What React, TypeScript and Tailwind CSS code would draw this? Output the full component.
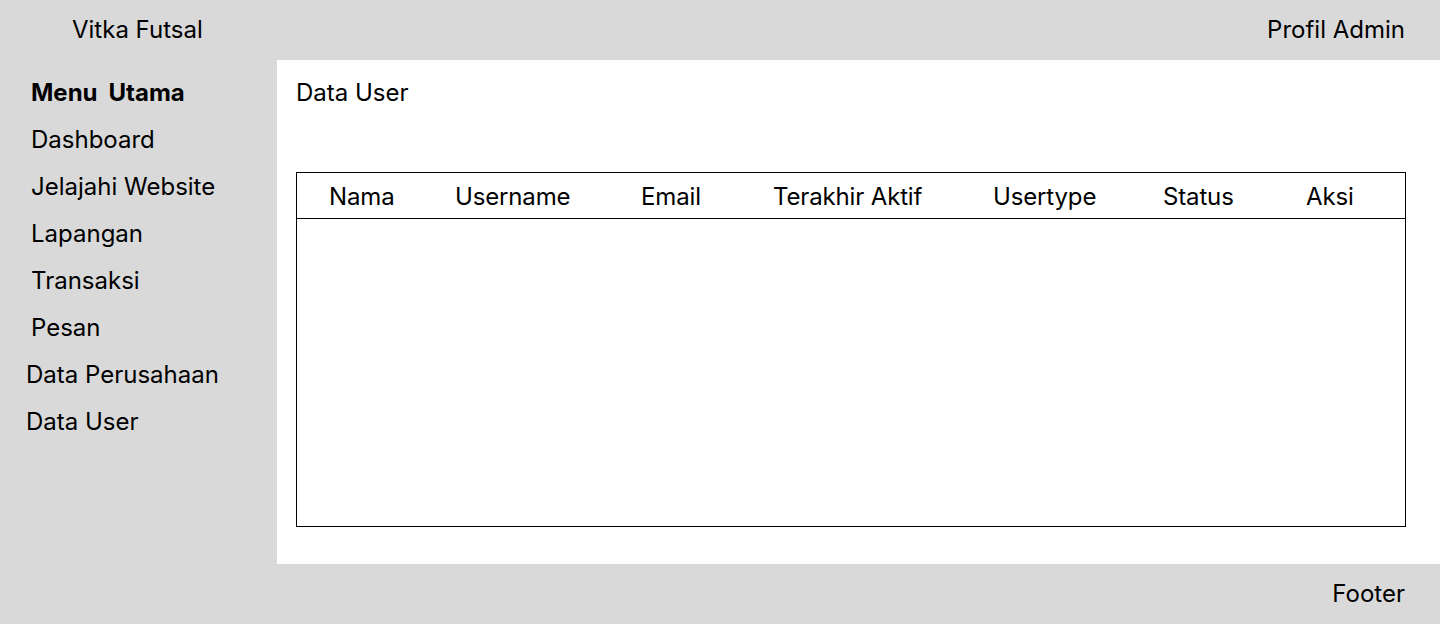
import React from "react";

const menu = [
  { label: "Dashboard", pl: "pl-[31px]" },
  { label: "Jelajahi Website", pl: "pl-[31px]" },
  { label: "Lapangan", pl: "pl-[31px]" },
  { label: "Transaksi", pl: "pl-[31px]" },
  { label: "Pesan", pl: "pl-[31px]" },
  { label: "Data Perusahaan", pl: "pl-[26px]" },
  { label: "Data User", pl: "pl-[26px]" },
];

const cols = [
  { label: "Nama", w: "w-[126px]" },
  { label: "Username", w: "w-[186px]" },
  { label: "Email", w: "w-[132px]" },
  { label: "Terakhir Aktif", w: "w-[220px]" },
  { label: "Usertype", w: "w-[170px]" },
  { label: "Status", w: "w-[143px]" },
  { label: "Aksi", w: "w-[80px]" },
];

export default function App() {
  return (
    <div
      className="w-[1440px] h-[624px] flex flex-col bg-[#d9d9d9] text-black text-[24px]"
      style={{ fontFamily: "Inter, 'Noto Sans', sans-serif" }}
    >
      <header className="h-[60px] flex items-center justify-between pl-[72px] pr-[35px]">
        <span>Vitka Futsal</span>
        <span>Profil Admin</span>
      </header>
      <div className="flex h-[504px]">
        <aside className="w-[277px] pt-[9px] flex flex-col">
          <div className="pl-[31px] leading-[47px] font-bold flex gap-[11px]">
            <span>Menu</span>
            <span>Utama</span>
          </div>
          {menu.map((m) => (
            <div key={m.label} className={`${m.pl} leading-[47px]`}>
              {m.label}
            </div>
          ))}
        </aside>
        <main className="flex-1 bg-white pl-[19px] pr-[34px] pt-[9px]">
          <div className="leading-[47px]">Data User</div>
          <div className="mt-[56px] h-[355px] border border-black flex flex-col">
            <div className="h-[46px] border-b border-black flex items-center pl-[32px] pt-[2px] tracking-[-0.15px]">
              {cols.map((c) => (
                <div key={c.label} className={`${c.w} shrink-0`}>
                  {c.label}
                </div>
              ))}
            </div>
          </div>
        </main>
      </div>
      <footer className="h-[60px] flex items-center justify-end pr-[35px]">
        <span>Footer</span>
      </footer>
    </div>
  );
}
